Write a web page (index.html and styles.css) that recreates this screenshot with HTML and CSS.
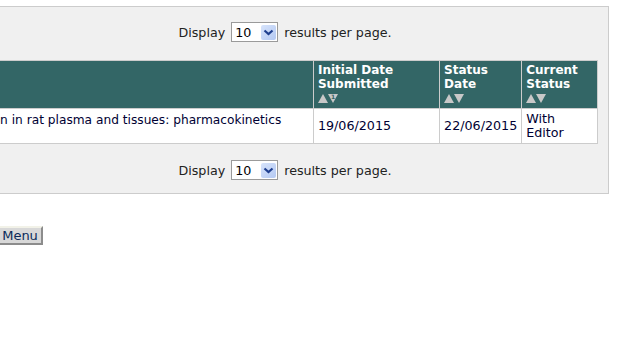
FILE: index.html
```html
<!DOCTYPE html>
<html lang="en">
<head>
  <meta charset="UTF-8" />
  <title>Submissions with Editor</title>
  <link rel="stylesheet" href="styles.css">
</head>
<body>

  <div class="page">
    <div class="panel">
      <div class="pager">
        Display
        <span class="select"><span class="select-value">10</span><span class="select-btn"><svg width="11" height="7" viewBox="0 0 11 7"><path d="M1.5 1.5 L5.5 5 L9.5 1.5" fill="none" stroke="#1f3f8f" stroke-width="2.2"/></svg></span></span>
        results per page.
      </div>

      <table class="results">
        <thead>
          <tr>
            <th class="col-title"></th>
            <th class="col-init">Initial Date Submitted<br><span class="sort"><svg width="20" height="10" viewBox="0 0 20 10"><path d="M0 10 L5 1 L10 10 Z" fill="#c8c8c8"/><path d="M10 1 L20 1 L15 10 Z" fill="#c8c8c8"/><text x="15" y="6" font-size="6" font-family="DejaVu Sans, sans-serif" text-anchor="middle" fill="#336666">1</text></svg></span></th>
            <th class="col-date">Status Date<br><span class="sort"><svg width="20" height="10" viewBox="0 0 20 10"><path d="M0 10 L5 1 L10 10 Z" fill="#c8c8c8"/><path d="M10 1 L20 1 L15 10 Z" fill="#c8c8c8"/></svg></span></th>
            <th class="col-status">Current Status<br><span class="sort"><svg width="20" height="10" viewBox="0 0 20 10"><path d="M0 10 L5 1 L10 10 Z" fill="#c8c8c8"/><path d="M10 1 L20 1 L15 10 Z" fill="#c8c8c8"/></svg></span></th>
          </tr>
        </thead>
        <tbody>
          <tr>
            <td class="title">ation in rat plasma and tissues: pharmacokinetics</td>
            <td>19/06/2015</td>
            <td>22/06/2015</td>
            <td>With<br>Editor</td>
          </tr>
        </tbody>
      </table>

      <div class="pager">
        Display
        <span class="select"><span class="select-value">10</span><span class="select-btn"><svg width="11" height="7" viewBox="0 0 11 7"><path d="M1.5 1.5 L5.5 5 L9.5 1.5" fill="none" stroke="#1f3f8f" stroke-width="2.2"/></svg></span></span>
        results per page.
      </div>
    </div>

    <div class="actions">
      <button class="menu-btn">Main Menu</button>
    </div>
  </div>

</body>
</html>
```

FILE: styles.css
```css
body {
  margin: 0;
  font-family: 'DejaVu Sans', Verdana, sans-serif;
  font-size: 12.7px;
  color: #000033;
  background: #fff;
}
.page {
  margin-left: -41px;
  padding-top: 6px;
}
.panel {
  width: 626px;
  background-color: #f0f0f0;
  border: 1px solid #cccccc;
  padding: 15px 10px 13px 12px;
}
.pager {
  display: flex;
  justify-content: center;
  align-items: center;
  gap: 6px;
  color: #222;
  height: 20px;
}
.select {
  display: flex;
  align-items: center;
  width: 45px;
  height: 18px;
  background: #fff;
  border: 1px solid #9a9a9a;
}
.select-value {
  flex: 1;
  padding-left: 3px;
  color: #000;
}
.select-btn {
  width: 15px;
  height: 15px;
  margin-right: 1px;
  display: flex;
  align-items: center;
  justify-content: center;
  background: linear-gradient(135deg, #d6e3fb, #b4c9f3);
  border-radius: 2px;
}
.results {
  width: 626px;
  border-collapse: collapse;
  margin: 18px 0 16px 0;
  background: #fff;
}
.results th {
  background-color: #336666;
  color: #fff;
  font-size: 12px;
  font-weight: bold;
  text-align: left;
  vertical-align: top;
  line-height: 14px;
  padding: 2px 4px 2px 4px;
  border: 1px solid #cccccc;
}
.results td {
  border: 1px solid #cccccc;
  padding: 3px 4px;
  line-height: 14px;
  vertical-align: middle;
  height: 27px;
}
.results td.title {
  font-size: 12.2px;
  vertical-align: top;
  padding-top: 4px;
}
.sort {
  display: inline-block;
  height: 12px;
  padding-top: 1px;
}
.col-title {
  width: 336px;
}
.col-init {
  width: 118px;
}
.col-date {
  width: 70px;
}
.col-status {
  width: 67px;
}
.actions {
  padding-top: 32px;
}
.menu-btn {
  font-family: 'DejaVu Sans', Verdana, sans-serif;
  font-size: 13px;
  color: #0a2a5a;
  background: #d8d8d8;
  border: 2px solid;
  border-color: #f2f2e8 #8c8c8c #8c8c8c #f2f2e8;
  padding: 0 3px 0 6px;
  height: 19px;
  line-height: 15px;
}
```
